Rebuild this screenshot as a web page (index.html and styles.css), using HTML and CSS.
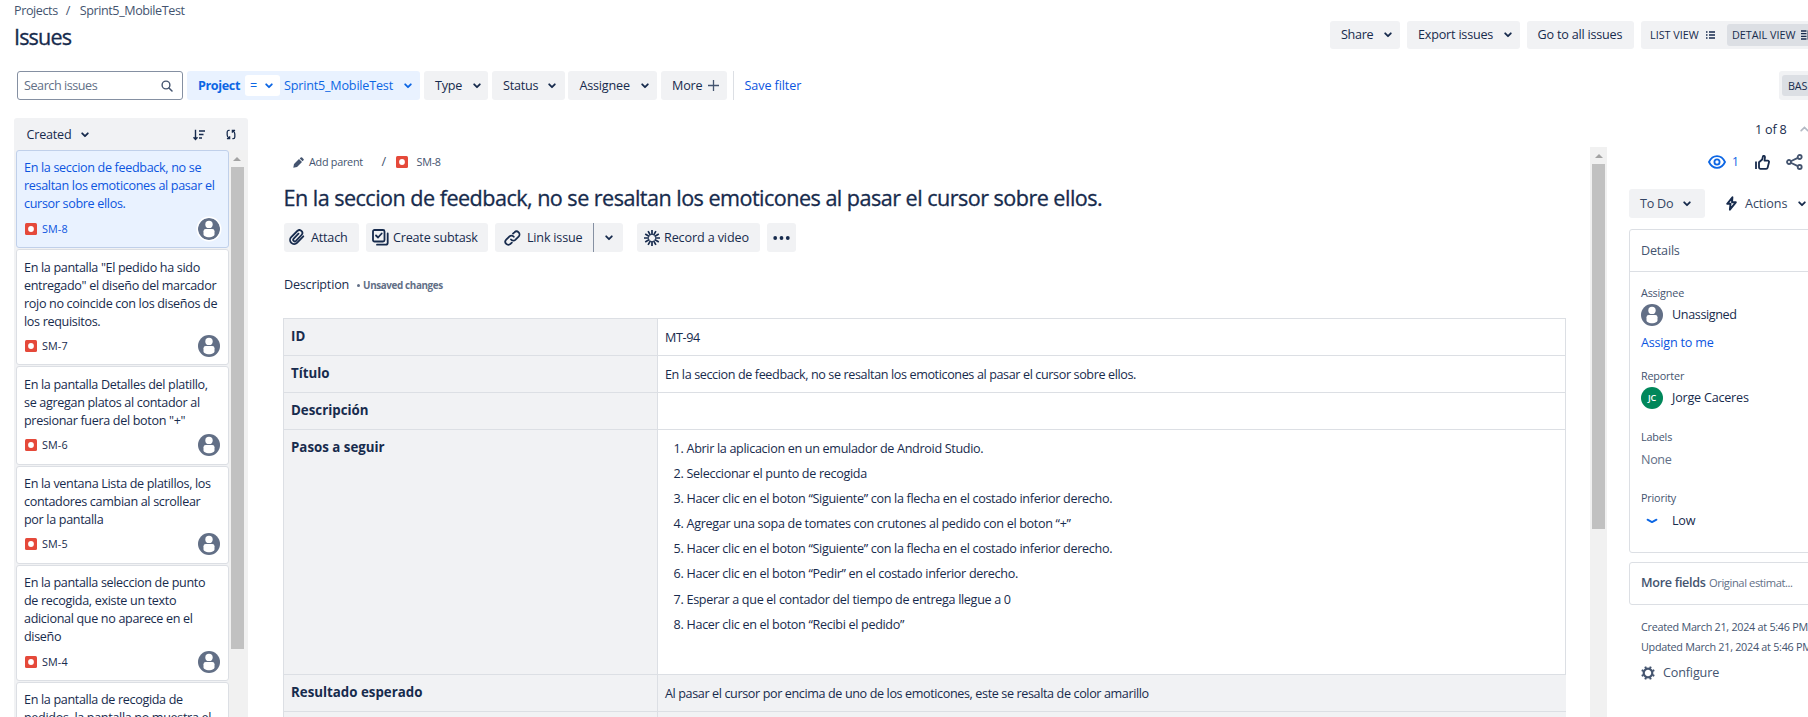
FILE: index.html
```html
<!DOCTYPE html>
<html lang="es">
<head>
<meta charset="utf-8">
<title>Issues</title>
<link rel="stylesheet" href="styles.css">
</head>
<body>
<svg class="defs" width="0" height="0">
  <symbol id="chev" viewBox="0 0 8 6"><path d="M1.2 1.3 4 4.2 6.8 1.3" fill="none" stroke="currentColor" stroke-width="1.8" stroke-linecap="round" stroke-linejoin="round"/></symbol>
  <symbol id="bug" viewBox="0 0 12 12"><rect width="12" height="12" rx="1.5" fill="#E5493A"/><circle cx="6" cy="6" r="2.9" fill="#fff"/></symbol>
  <symbol id="person" viewBox="0 0 22 22"><circle cx="11" cy="11" r="11" fill="#626F86"/><circle cx="11" cy="6.4" r="3.7" fill="#fff"/><path d="M5.5 13.2a2.2 2.2 0 0 1 2.2-2.2h6.6a2.2 2.2 0 0 1 2.2 2.2v3.3c0 1.2-2.4 2.7-5.5 2.7s-5.5-1.5-5.5-2.7z" fill="#fff"/></symbol>
</svg>

<div class="page">
  <nav class="crumbs"><span>Projects</span><span class="sep">/</span><span>Sprint5_MobileTest</span></nav>

  <header class="head">
    <h1>Issues</h1>
    <div class="head-actions">
      <button class="btn share">Share<svg class="chev"><use href="#chev"/></svg></button>
      <button class="btn export">Export issues<svg class="chev"><use href="#chev"/></svg></button>
      <button class="btn goto">Go to all issues</button>
      <div class="toggle">
        <span class="tog">LIST VIEW
          <svg width="9" height="8" viewBox="0 0 9 8"><path d="M0 1h1.500M3 1h6M0 4h1.500M3 4h6M0 7h1.500M3 7h6" stroke="currentColor" stroke-width="1.300"/></svg></span>
        <span class="tog on">DETAIL VIEW
          <svg width="13" height="10" viewBox="0 0 13 10"><path d="M0 1h5.500M0 3.600h5.500M0 6.300h5.500M0 9h5.500" stroke="currentColor" stroke-width="1.300"/><rect x="7.200" y="1" width="5" height="8" fill="none" stroke="currentColor" stroke-width="1.300"/></svg></span>
      </div>
    </div>
  </header>

  <div class="filters">
    <div class="search"><span>Search issues</span>
      <svg width="12" height="12" viewBox="0 0 12 12"><circle cx="5" cy="5" r="3.900" fill="none" stroke="#44546F" stroke-width="1.400"/><path d="m8 8 3 3" stroke="#44546F" stroke-width="1.500" stroke-linecap="round"/></svg></div>
    <div class="project"><b>Project</b>
      <span class="op">=<svg class="chev"><use href="#chev"/></svg></span>
      <span class="val">Sprint5_MobileTest</span><svg class="chev"><use href="#chev"/></svg></div>
    <button class="btn f-type">Type<svg class="chev"><use href="#chev"/></svg></button>
    <button class="btn f-status">Status<svg class="chev"><use href="#chev"/></svg></button>
    <button class="btn f-assignee">Assignee<svg class="chev"><use href="#chev"/></svg></button>
    <button class="btn f-more">More<svg width="11" height="11" viewBox="0 0 11 11"><path d="M5.500 0v11M0 5.500h11" stroke="#44546F" stroke-width="1.300"/></svg></button>
    <span class="bar"></span>
    <a class="save">Save filter</a>
    <div class="mode"><span>BAS</span></div>
  </div>

  <main class="main">
    <aside class="list">
      <div class="list-head"><span>Created</span><svg class="chev"><use href="#chev"/></svg>
        <svg class="sort" width="12" height="12" viewBox="0 0 12 12"><path d="M2.500.8v9.700M.500 8.300l2 2.200 2-2.200M6 2h6M6 5.500h4.500M6 9h3" fill="none" stroke="currentColor" stroke-width="1.400"/></svg>
        <svg class="refresh" width="10" height="11" viewBox="0 0 11 12"><path d="M4 1.500H3A1.800 1.800 0 0 0 1.300 3.300v3.200c0 1.500.7 2.800 2.200 3.500M1 10.500h3V7.800M7 10.500h1a1.800 1.800 0 0 0 1.700-1.800V5.500C9.700 4 9 2.700 7.500 2M10 1.500H7v2.700" fill="none" stroke="currentColor" stroke-width="1.400"/></svg>
      </div>
      <div class="list-body">
        <div class="cards">
          <article class="card sel"><p>En la seccion de feedback, no se<br>resaltan los emoticones al pasar el<br>cursor sobre ellos.</p><div class="key"><svg class="bug"><use href="#bug"/></svg><span>SM-8</span><svg class="ava"><use href="#person"/></svg></div></article>
          <article class="card"><p>En la pantalla "El pedido ha sido<br>entregado" el diseño del marcador<br>rojo no coincide con los diseños de<br>los requisitos.</p><div class="key"><svg class="bug"><use href="#bug"/></svg><span>SM-7</span><svg class="ava"><use href="#person"/></svg></div></article>
          <article class="card"><p>En la pantalla Detalles del platillo,<br>se agregan platos al contador al<br>presionar fuera del boton "+"</p><div class="key"><svg class="bug"><use href="#bug"/></svg><span>SM-6</span><svg class="ava"><use href="#person"/></svg></div></article>
          <article class="card"><p>En la ventana Lista de platillos, los<br>contadores cambian al scrollear<br>por la pantalla</p><div class="key"><svg class="bug"><use href="#bug"/></svg><span>SM-5</span><svg class="ava"><use href="#person"/></svg></div></article>
          <article class="card"><p>En la pantalla seleccion de punto<br>de recogida, existe un texto<br>adicional que no aparece en el<br>diseño</p><div class="key"><svg class="bug"><use href="#bug"/></svg><span>SM-4</span><svg class="ava"><use href="#person"/></svg></div></article>
          <article class="card"><p>En la pantalla de recogida de<br>pedidos, la pantalla no muestra el</p></article>
        </div>
        <div class="scroll scroll-list"><i class="up"></i><i class="thumb"></i></div>
      </div>
    </aside>

    <section class="issue">
      <div class="parent">
        <svg width="11" height="11" viewBox="0 0 11 11"><path d="M.300 10.700 1 7 6 2l3 3-5 5zM6.700 1.400 7.700.5a1 1 0 0 1 1.400 0L10.500 1.900a1 1 0 0 1 0 1.400L9.600 4.300z" fill="#44546F"/></svg>
        <span class="add">Add parent</span><span class="slash">/</span><svg class="bug"><use href="#bug"/></svg><span>SM-8</span>
      </div>
      <h2>En la seccion de feedback, no se resaltan los emoticones al pasar el cursor sobre ellos.</h2>
      <div class="tools">
        <button class="btn t-attach"><svg width="16" height="17" viewBox="0 0 16 17"><path d="M14.300 7.300 8 13.800a4 4 0 0 1-5.800-5.600L8.300 2a2.900 2.900 0 0 1 4.200 4L7 11.900A1.600 1.600 0 0 1 4.700 9.600L9.500 4.700" fill="none" stroke="currentColor" stroke-width="1.800" stroke-linecap="round"/></svg>Attach</button>
        <button class="btn t-sub"><svg width="17" height="17" viewBox="0 0 17 17"><rect x="1" y="1" width="11.500" height="11.500" rx="1.500" fill="none" stroke="currentColor" stroke-width="1.800"/><path d="m4 6.500 2 2 3.700-4M15.700 4.500v9.200a2 2 0 0 1-2 2H5" fill="none" stroke="currentColor" stroke-width="1.800" stroke-linecap="round"/></svg>Create subtask</button>
        <div class="split"><button class="btn t-link"><svg width="17" height="16" viewBox="0 0 17 16"><path d="M7 9.500a3 3 0 0 0 4.300.3l3.300-3.200a3 3 0 0 0-4.200-4.300L9 3.600M9.800 6.800A3 3 0 0 0 5.500 6.400L2.200 9.700a3 3 0 0 0 4.300 4.200l1.300-1.200" fill="none" stroke="currentColor" stroke-width="1.800" stroke-linecap="round"/></svg>Link issue</button><button class="btn t-drop"><svg class="chev"><use href="#chev"/></svg></button></div>
        <button class="btn t-rec"><svg width="16" height="16" viewBox="-8 -8 16 16"><path d="M0-3v-5M0 3v5M-3 0h-5M3 0h5M1.500-2.600l2.400-4.200M-1.500-2.600l-2.400-4.200M1.500 2.600l2.400 4.200M-1.500 2.600l-2.400 4.200M2.600 1.500l4.200 2.400M2.600-1.500l4.200-2.400M-2.600 1.500l-4.200 2.400M-2.600-1.500l-4.200-2.400" stroke="currentColor" stroke-width="1.700"/></svg>Record a video</button>
        <button class="btn t-dots"><svg width="17" height="4" viewBox="0 0 17 4"><circle cx="2.200" cy="2" r="1.900" fill="currentColor"/><circle cx="8.500" cy="2" r="1.900" fill="currentColor"/><circle cx="14.800" cy="2" r="1.900" fill="currentColor"/></svg></button>
      </div>
      <div class="desc"><span>Description</span><i></i><b>Unsaved changes</b></div>
      <div class="grid">
        <div class="th">ID</div><div class="td">MT-94</div>
        <div class="th">Título</div><div class="td">En la seccion de feedback, no se resaltan los emoticones al pasar el cursor sobre ellos.</div>
        <div class="th">Descripción</div><div class="td"></div>
        <div class="th steps">Pasos a seguir</div>
        <div class="td steps">
          <ol>
            <li>Abrir la aplicacion en un emulador de Android Studio.</li>
            <li>Seleccionar el punto de recogida</li>
            <li>Hacer clic en el boton “Siguiente” con la flecha en el costado inferior derecho.</li>
            <li>Agregar una sopa de tomates con crutones al pedido con el boton “+”</li>
            <li>Hacer clic en el boton “Siguiente” con la flecha en el costado inferior derecho.</li>
            <li>Hacer clic en el boton “Pedir” en el costado inferior derecho.</li>
            <li>Esperar a que el contador del tiempo de entrega llegue a 0</li>
            <li>Hacer clic en el boton “Recibi el pedido”</li>
          </ol>
        </div>
        <div class="th">Resultado esperado</div><div class="td shade">Al pasar el cursor por encima de uno de los emoticones, este se resalta de color amarillo</div>
        <div class="th"></div><div class="td shade"></div>
      </div>
    </section>

    <div class="scroll scroll-issue"><i class="up"></i><i class="thumb"></i></div>

    <aside class="side">
      <div class="pager"><span>1 of 8</span><svg width="9" height="6" viewBox="0 0 9 6"><path d="M1.200 4.700 4.500 1.500l3.300 3.200" fill="none" stroke="#B3B9C4" stroke-width="1.700" stroke-linecap="round"/></svg></div>
      <div class="acts">
        <svg width="18" height="14" viewBox="0 0 18 14"><path d="M1 7c1.800-3.800 4.600-5.900 8-5.900S15.200 3.200 17 7c-1.800 3.800-4.600 5.900-8 5.900S2.800 10.800 1 7z" fill="none" stroke="#0C66E4" stroke-width="1.800"/><circle cx="9" cy="7" r="2.600" fill="none" stroke="#0C66E4" stroke-width="1.800"/></svg>
        <span class="one">1</span>
        <svg class="thumbup" width="15" height="15" viewBox="0 0 15 15"><path d="M1 6.500v7.500M4 7.200 7.200 4.500 8 1.300c.4-.8 2-.5 2 .9L9.500 5.600h3.300a1.300 1.300 0 0 1 1.200 1.700l-1.400 5.400a1.500 1.500 0 0 1-1.400 1.100H5.500A1.500 1.500 0 0 1 4 12.300z" fill="none" stroke="#172B4D" stroke-width="1.800" stroke-linejoin="round"/></svg>
        <svg class="sharei" width="17" height="16" viewBox="0 0 17 16"><g fill="none" stroke="#44546F" stroke-width="1.800"><circle cx="3" cy="8" r="2"/><circle cx="13.700" cy="3" r="2"/><circle cx="13.700" cy="13" r="2"/><path d="m4.800 7.200 7-3.300M4.800 8.800l7 3.300"/></g></svg>
      </div>
      <div class="status"><button class="btn todo">To Do<svg class="chev"><use href="#chev"/></svg></button>
        <svg class="bolt" width="11" height="15" viewBox="0 0 11 15"><path d="M6.400 1.300 1.200 7.800h3.300l-.6 5.900 5.900-7.400H6z" fill="none" stroke="#172B4D" stroke-width="1.900" stroke-linejoin="round"/></svg>
        <span class="actlabel">Actions</span><svg class="chev"><use href="#chev"/></svg></div>
      <div class="details">
        <div class="dh">Details</div>
        <div class="lab l1">Assignee</div>
        <div class="row r1"><svg class="ava"><use href="#person"/></svg><span>Unassigned</span></div>
        <a class="assign">Assign to me</a>
        <div class="lab l2">Reporter</div>
        <div class="row r2"><span class="jc">JC</span><span>Jorge Caceres</span></div>
        <div class="lab l3">Labels</div>
        <div class="none">None</div>
        <div class="lab l4">Priority</div>
        <div class="row r4"><svg width="22" height="22" viewBox="0 0 22 22"><path d="m6.500 9.600 4.500 2.500 4.500-2.500" fill="none" stroke="#0C66E4" stroke-width="1.800" stroke-linecap="round" stroke-linejoin="round"/></svg><span>Low</span></div>
      </div>
      <div class="more"><b>More fields</b><span>Original estimat...</span></div>
      <div class="stamp">Created March 21, 2024 at 5:46 PM</div>
      <div class="stamp">Updated March 21, 2024 at 5:46 PM</div>
      <div class="conf"><svg width="14" height="14" viewBox="-7 -7 14 14"><circle r="4.300" fill="none" stroke="currentColor" stroke-width="2.200"/><path d="M2-4.500l.8-1.800M-2-4.500l-.8-1.800M2 4.500l.8 1.800M-2 4.500l-.8 1.800M4.500-2l1.800-.8M4.500 2l1.800.8M-4.500-2l-1.800-.8M-4.500 2l-1.800.8" stroke="currentColor" stroke-width="2"/></svg>Configure</div>
    </aside>
  </main>
</div>
</body>
</html>
```
FILE: styles.css
```css
* { box-sizing: border-box; }
body {
  margin: 0;
  overflow: hidden;
  background: #fff;
  color: #172B4D;
  font: 400 12.6px/18px "Open Sans", "Noto Sans", sans-serif;
  letter-spacing: -0.35px;
}
h1, h2, p, ol { margin: 0; padding: 0; font-weight: 500; }
svg { flex: none; display: block; }
.defs { position: absolute; }
.page { width: 1808px; height: 717px; overflow: hidden; display: flex; flex-direction: column; }
.chev { width: 8px; height: 6px; }
.bug { width: 12px; height: 12px; }
.ava { width: 22px; height: 22px; }

.btn {
  display: flex; align-items: center; flex: none;
  height: 29px; margin: 0; padding: 0 0 0 11px;
  border: 0; border-radius: 3px;
  background: #F1F2F4; color: #172B4D;
  font: inherit; font-weight: 500; letter-spacing: -0.2px; white-space: nowrap;
}

/* Header */
.crumbs { display: flex; height: 21px; padding-left: 14px; line-height: 21px; color: #44546F; letter-spacing: -0.42px; }
.crumbs .sep { width: 22px; padding-left: 8px; }
.head { display: flex; height: 50px; }
.head h1, .issue h2 { font-size: 21.6px; font-weight: 500; -webkit-text-stroke: 0.3px currentColor; }
.head h1 { flex: none; width: 1330px; padding-left: 14px; line-height: 31px; letter-spacing: -0.85px; }
.head-actions { display: flex; flex: none; gap: 7px; }
.head-actions .btn { height: 28px; }
.share { width: 70px; letter-spacing: -0.3px; }
.share .chev { margin-left: 11px; }
.export { width: 113px; }
.export .chev { margin-left: 11px; }
.goto { width: 107px; padding-left: 10.5px; }
.toggle { display: flex; align-items: center; height: 28px; padding: 0 3px; background: #F1F2F4; border-radius: 3px; }
.tog { display: flex; align-items: center; flex: none; height: 22px; width: 83px; padding-left: 6px; font-size: 10.8px; font-weight: 500; letter-spacing: 0; white-space: nowrap; }
.tog svg { margin-left: 7px; }
.tog.on { width: 90px; padding-left: 5px; background: #DCDFE4; border-radius: 3px; }
.tog.on svg { margin-left: 5px; }

/* Filters */
.filters { display: flex; height: 47px; padding-left: 17px; }
.filters > * { flex: none; }
.search { display: flex; align-items: center; justify-content: space-between; width: 166px; height: 29px; padding: 0 9px 0 6px; border: 1px solid #8590A2; border-radius: 3px; color: #626F86; letter-spacing: -0.45px; }
.project { display: flex; align-items: center; width: 233px; height: 29px; margin: 0 4px; padding-left: 11px; border-radius: 3px; background: #E9F2FF; color: #0C66E4; font-weight: 500; letter-spacing: -0.19px; }
.project b { width: 47px; letter-spacing: -0.38px; }
.op { display: flex; align-items: center; width: 35px; height: 21px; margin-right: 4px; padding-left: 5px; background: #fff; border-radius: 3px; }
.op .chev { margin-left: 8px; }
.val { width: 120px; }
.f-type { width: 64px; margin-right: 4px; }
.f-type .chev, .f-assignee .chev { margin-left: 11px; }
.f-status .chev { margin-left: 10px; }
.f-status { width: 73px; margin-right: 3px; }
.f-assignee { width: 89px; margin-right: 4px; padding-left: 11.5px; }
.f-more { width: 66px; }
.f-more svg { margin-left: 5.5px; }
.bar { width: 1px; height: 29px; margin: 0 10.5px 0 6px; background: #DCDFE4; }
.save { width: 1034.5px; line-height: 29px; color: #0C55E0; font-weight: 500; letter-spacing: -0.1px; }
.mode { height: 29px; padding: 4px 0 4px 3px; background: #F1F2F4; border-radius: 3px 0 0 3px; }
.mode span { display: block; width: 26px; padding-left: 6px; line-height: 21px; background: #DCDFE4; border-radius: 3px 0 0 3px; font-size: 10.8px; font-weight: 500; letter-spacing: -0.2px; }

/* Issue list */
.main { display: flex; height: 599px; padding-left: 14px; }
.list { flex: none; width: 234px; background: #F1F2F4; border-radius: 3px 3px 0 0; overflow: hidden; }
.list-head { display: flex; align-items: center; height: 32px; padding: 1px 0 0 12.5px; font-weight: 500; letter-spacing: -0.22px; }
.list-head span { width: 54px; }
.sort { margin-left: 104px; }
.refresh { margin-left: 21px; }
.list-body { display: flex; justify-content: space-between; height: 567px; }
.cards { width: 213px; margin-left: 2px; }
.card { margin-bottom: 1px; padding: 8.4px 7px 10.8px; background: #fff; border: 1px solid #DCDFE4; border-radius: 3px; }
.card p { font-weight: 400; letter-spacing: -0.34px; white-space: nowrap; }
.card .key { display: flex; align-items: center; height: 15px; margin-top: 8px; font-size: 10.8px; font-weight: 500; letter-spacing: 0.1px; }
.key .bug { margin: 0 5px 0 1px; }
.key .ava { margin: -4px 1px -4px auto; }
.card.sel { background: #E9F2FF; border-color: #C0D0EA; color: #0C55E0; }
.sel .ava { border-radius: 50%; box-shadow: 0 0 0 1.5px #fff; }

/* Scrollbars */
.scroll { display: flex; flex-direction: column; align-items: center; flex: none; background: #F1F1F1; }
.scroll .up { width: 0; height: 0; border: 4px solid transparent; border-top: 0; border-bottom: 4px solid #A3A3A3; }
.scroll .thumb { width: 13px; background: #C1C1C1; }
.scroll-list { width: 19px; align-items: flex-start; }
.scroll-list .up { margin: 7px 0 6px 4px; }
.scroll-list .thumb { margin-left: 2px; height: 482px; }
.scroll-issue { width: 17px; height: 570px; margin-top: 29px; }
.scroll-issue .up { margin: 7px 0 6px; }
.scroll-issue .thumb { height: 365px; }

/* Issue content */
.issue { flex: none; width: 1283px; margin-right: 24px; margin-left: 35px; overflow: hidden; height: 599px; padding-top: 35px; }
.parent { display: flex; align-items: center; height: 18px; margin-left: 10px; color: #44546F; font-size: 10.8px; letter-spacing: -0.25px; }
.parent .add { width: 72.5px; margin-left: 5px; }
.slash { width: 14px; font-size: 12.6px; }
.parent .bug { margin-right: 9px; }
.issue h2 { height: 52px; margin-left: 0.5px; line-height: 53px; letter-spacing: -0.535px; white-space: nowrap; }
.tools { display: flex; margin-left: 1px; }
.tools .btn { padding-left: 5px; }
.t-attach { width: 75px; margin-right: 7px; }
.t-attach svg { margin-right: 6px; }
.t-sub { width: 122px; margin-right: 7px; }
.tools .t-sub { padding-left: 6px; }
.t-sub svg { margin-right: 4px; }
.split { display: flex; margin-right: 14px; }
.tools .t-link { width: 98px; padding-left: 9px; border-radius: 3px 0 0 3px; }
.t-link svg { margin-right: 6px; }
.tools .t-drop { width: 30px; padding-left: 11px; border-left: 1px solid #8590A2; border-radius: 0 3px 3px 0; }
.tools .t-rec { width: 123px; margin-right: 7px; padding-left: 7px; letter-spacing: -0.13px; }
.t-rec svg { margin-right: 4px; }
.tools .t-dots { width: 29px; padding-left: 6px; }
.desc { display: flex; align-items: center; height: 66px; margin-left: 1px; font-weight: 500; letter-spacing: -0.2px; }
.desc i { width: 3px; height: 3px; margin: 0 3.5px 0 7.5px; border-radius: 50%; background: #626F86; }
.desc b { color: #626F86; font-size: 9.9px; letter-spacing: -0.38px; }
.grid {
  display: grid; grid-template-columns: 374px 909px;
  grid-template-rows: 37px 37px 37px 245px 37px 37px;
  border: 1px solid #DCDFE4; border-bottom: 0;
}
.th, .td { padding: 9.5px 7px 0; border-bottom: 1px solid #DCDFE4; white-space: nowrap; }
.th { padding-top: 8.5px; background: #F1F2F4; border-right: 1px solid #DCDFE4; font-size: 13.3px; font-weight: 700; line-height: 17px; letter-spacing: 0; }
.td { letter-spacing: -0.385px; }
.td.steps { padding-left: 28.5px; letter-spacing: -0.325px; }
.td.shade { background: #F1F2F4; letter-spacing: -0.385px; }
ol li { height: 25.2px; font-weight: 400; padding-left: 0; }
ol li::marker { letter-spacing: -0.3px; }

/* Side panel */
.side { flex: none; width: 201px; margin-left: 22px; color: #172B4D; white-space: nowrap; }
.pager { display: flex; align-items: center; height: 23px; padding: 1px 0 0 126px; letter-spacing: -0.2px; }
.pager svg { margin: 0 0 2px 13px; }
.acts { display: flex; align-items: center; height: 42px; padding-left: 79px; }
.one { width: 24px; margin-left: 5px; padding-left: 1px; color: #0C66E4; font-weight: 500; font-size: 12px; }
.sharei { margin-left: 16px; }
.status { display: flex; align-items: center; height: 40px; padding-top: 1px; font-weight: 500; }
.todo { width: 76px; letter-spacing: -0.25px; color: #344563; }
.todo .chev { margin-left: 10px; color: #172B4D; }
.bolt { margin: 0 8px 0 21px; }
.actlabel { width: 53px; letter-spacing: -0.08px; color: #344563; }
.details { width: 201px; height: 324px; margin-top: 6px; padding-left: 11px; border: 1px solid #DCDFE4; border-radius: 3px; }
.dh { height: 42px; margin-left: -11px; padding-left: 11px; line-height: 42px; border-bottom: 1px solid #DCDFE4; color: #44546F; font-weight: 500; letter-spacing: -0.2px; }
.lab { color: #44546F; font-size: 10.8px; font-weight: 500; letter-spacing: -0.18px; line-height: 16px; }
.l1 { margin-top: 13px; }
.row { display: flex; align-items: center; gap: 9px; height: 22px; letter-spacing: -0.22px; }
.r1 { margin-top: 3px; letter-spacing: -0.38px; }
.assign { display: block; margin-top: 8px; color: #0C55E0; letter-spacing: -0.2px; }
.l2 { margin-top: 16px; }
.r2 { margin-top: 3px; }
.jc { width: 22px; height: 22px; border-radius: 50%; background: #00875A; color: #fff; font-size: 9px; font-weight: 600; line-height: 22px; text-align: center; }
.l3 { margin-top: 20px; }
.none { margin-top: 6px; color: #626F86; }
.l4 { margin-top: 21px; }
.r4 { margin-top: 4px; }
.more { display: flex; align-items: center; height: 43px; margin: 8.5px 0 12.5px; padding-left: 11px; border: 1px solid #DCDFE4; border-radius: 3px; color: #44546F; }
.more b { width: 68px; font-weight: 600; letter-spacing: -0.32px; }
.more span { color: #626F86; font-size: 11.2px; letter-spacing: -0.42px; }
.stamp { height: 20px; padding-left: 12px; line-height: 20px; color: #44546F; font-size: 10.8px; letter-spacing: -0.27px; }
.conf { display: flex; align-items: center; gap: 8px; height: 31px; padding-left: 12px; color: #44546F; font-weight: 500; letter-spacing: -0.15px; }
```
